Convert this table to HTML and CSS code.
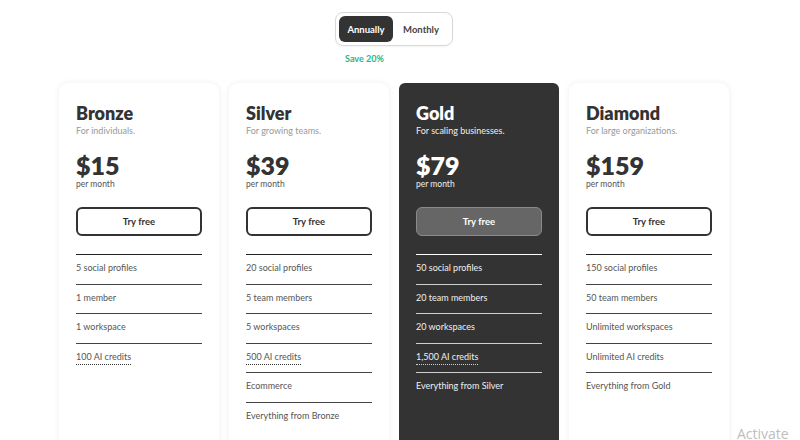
FILE: index.html
```html
<!DOCTYPE html>
<html>
<head>
<meta charset="utf-8">
<link rel="stylesheet" href="styles.css">
</head>
<body>
<div class="page">
  <div class="billing">
    <div class="toggle">
      <span class="opt active">Annually</span>
      <span class="opt">Monthly</span>
    </div>
    <div class="save">Save 20%</div>
  </div>
  <div class="plans">
    <div class="card">
      <h2 class="name">Bronze</h2>
      <p class="tag">For individuals.</p>
      <div class="price">$15</div>
      <div class="per">per month</div>
      <button class="try">Try free</button>
      <ul class="features">
        <li>5 social profiles</li>
        <li>1 member</li>
        <li>1 workspace</li>
        <li class="plain"><span class="dotted">100 AI credits</span></li>
      </ul>
    </div>
    <div class="card">
      <h2 class="name">Silver</h2>
      <p class="tag">For growing teams.</p>
      <div class="price">$39</div>
      <div class="per">per month</div>
      <button class="try">Try free</button>
      <ul class="features">
        <li>20 social profiles</li>
        <li>5 team members</li>
        <li>5 workspaces</li>
        <li><span class="dotted">500 AI credits</span></li>
        <li>Ecommerce</li>
        <li>Everything from Bronze</li>
      </ul>
    </div>
    <div class="card dark">
      <h2 class="name">Gold</h2>
      <p class="tag">For scaling businesses.</p>
      <div class="price">$79</div>
      <div class="per">per month</div>
      <button class="try">Try free</button>
      <ul class="features">
        <li>50 social profiles</li>
        <li>20 team members</li>
        <li>20 workspaces</li>
        <li><span class="dotted">1,500 AI credits</span></li>
        <li>Everything from Silver</li>
      </ul>
    </div>
    <div class="card">
      <h2 class="name">Diamond</h2>
      <p class="tag">For large organizations.</p>
      <div class="price">$159</div>
      <div class="per">per month</div>
      <button class="try">Try free</button>
      <ul class="features">
        <li>150 social profiles</li>
        <li>50 team members</li>
        <li>Unlimited workspaces</li>
        <li>Unlimited AI credits</li>
        <li>Everything from Gold</li>
      </ul>
    </div>
  </div>
</div>
<div class="watermark">Activate</div>
</body>
</html>
```
FILE: styles.css
```css
* { box-sizing: border-box; }
html, body { margin: 0; padding: 0; background: #fff; overflow: hidden; height: 440px; }
body { font-family: Lato, "Open Sans", sans-serif; color: #333; }
.page { width: 670px; margin-left: 59px; padding-top: 12px; }
.billing { width: 118px; margin: 0 auto; }
.toggle {
  display: flex; padding: 3px; border: 1px solid #d8d8d8; border-radius: 8px;
  width: 118px; height: 34px; box-shadow: 0 1px 2px rgba(0,0,0,0.05);
}
.opt {
  display: flex; align-items: center; justify-content: center;
  height: 26px; font-size: 9.5px; font-weight: 700; color: #444; flex: 1;
}
.opt.active { background: #333; color: #fff; border-radius: 6px; flex: 0 0 54px; }
.save { margin-top: 7px; padding-left: 10px; font-size: 9px; font-weight: 700; color: #2bb588; line-height: 12px; }
.plans { display: flex; gap: 10px; margin-top: 18px; }
.card {
  width: 160px; height: 400px; flex: 0 0 160px; background: #fff;
  border-radius: 9px; padding: 19px 17px;
  box-shadow: 0 0 6px rgba(0,0,0,0.07);
}
.name { margin: 0; font-size: 18px; line-height: 22px; font-weight: 800; color: #333; }
.tag { margin: 1px 0 0; font-size: 9px; line-height: 12px; color: #999; }
.price { margin-top: 15px; font-size: 25px; line-height: 26px; font-weight: 800; color: #333; }
.per { font-size: 8.5px; line-height: 12px; color: #555; }
.try {
  display: block; margin-top: 17px; width: 126px; height: 29px;
  border: 2px solid #333; border-radius: 6px; background: #fff;
  font-family: inherit; font-size: 9.5px; font-weight: 700; color: #333; cursor: pointer;
}
.features { list-style: none; margin: 18px 0 0; padding: 0; width: 126px; }
.features li {
  border-top: 1.5px solid #444; padding: 7px 0 9.5px; font-size: 9px; line-height: 12px; color: #555;
}
.features li:first-child { border-top-color: #222; }
.dotted { border-bottom: 1px dotted #333; padding-bottom: 2px; }
.card.dark { background: #333333; box-shadow: none; border-radius: 6px; }
.dark .name, .dark .price { color: #fff; }
.dark .tag, .dark .per { color: #eee; }
.dark .try { background: #666; border: 1.5px solid #8a8a8a; color: #fff; }
.dark .features li { border-top-color: #d0d0d0; color: #f0f0f0; }
.dark .features li:first-child { border-top-color: #fff; }
.dark .dotted { border-bottom-color: #ccc; }
.watermark {
  position: absolute; left: 737px; top: 424px; font-family: "Open Sans", sans-serif;
  font-size: 14px; color: #bdbdbd; white-space: nowrap;
}
```
